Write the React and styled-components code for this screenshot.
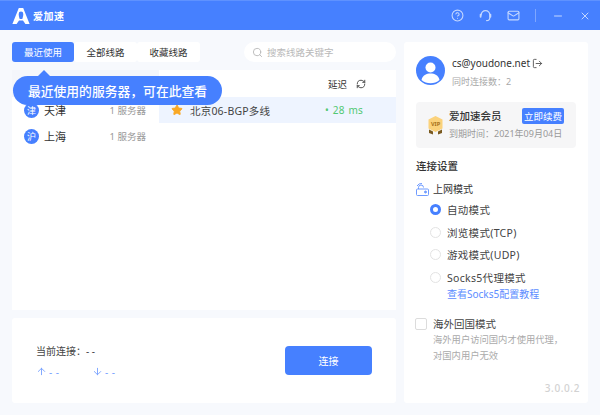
import styled, { createGlobalStyle } from "styled-components";
import { Search, RefreshCw, HelpCircle, Mail, Minus, X, LogOut, ArrowUp, ArrowDown, Star } from "lucide-react";

const Global = createGlobalStyle`
  html, body {
    margin: 0;
    padding: 0;
    background: #f7f9fd;
  }
  * {
    box-sizing: border-box;
  }
  body {
    font-family: "Noto Sans", "Noto Sans CJK SC", sans-serif;
  }
`;

const Page = styled.div`
  width: 600px;
  height: 415px;
  display: flex;
  flex-direction: column;
  overflow: hidden;
  background: #f7f9fd;
  color: #333;
`;

const Header = styled.header`
  height: 30px;
  flex: none;
  display: flex;
  align-items: center;
  justify-content: space-between;
  background: #4680ff;
  border-top: 1px solid #5f92ff;
  padding: 0 9px 0 12px;
  color: #fff;
`;

const Brand = styled.div`
  display: flex;
  align-items: center;
  gap: 3px;
  font-size: 10px;
  font-weight: 700;
  letter-spacing: 0.5px;
`;

const HeaderIcons = styled.div`
  display: flex;
  align-items: center;
  gap: 15px;
  color: #c4d7ff;
`;

const Divider = styled.span`
  width: 1px;
  height: 13px;
  background: #7ea6ff;
  margin: 0 1px 0 0;
`;

const Body = styled.main`
  flex: 1;
  display: flex;
  gap: 8px;
  padding: 12px;
  min-height: 0;
`;

const LeftColumn = styled.div`
  width: 384px;
  display: flex;
  flex-direction: column;
`;

const TopBar = styled.div`
  height: 20px;
  display: flex;
  align-items: center;
  margin-bottom: 8px;
`;

const Tab = styled.div`
  width: ${(p) => p.$width}px;
  height: 20px;
  display: flex;
  align-items: center;
  justify-content: center;
  border-radius: 3px;
  font-size: 9.5px;
  background: ${(p) => (p.$active ? "#4680ff" : "#fff")};
  color: ${(p) => (p.$active ? "#fff" : "#333")};
`;

const SearchBox = styled.div`
  width: 152px;
  height: 20px;
  margin-left: 44px;
  padding-left: 8px;
  display: flex;
  align-items: center;
  gap: 4px;
  border-radius: 10px;
  background: #fff;
  color: #b9b9b9;
  font-size: 9.5px;
`;

const ListPanel = styled.section`
  position: relative;
  height: 240px;
  display: flex;
  background: #fff;
`;

const Regions = styled.div`
  width: 147px;
  padding-top: 27px;
  background: linear-gradient(#f4f6fb 0, #f4f6fb 27px, #fff 27px);
`;

const RegionRow = styled.div`
  height: 26px;
  display: flex;
  align-items: center;
  padding: 0 13px 0 12px;
  font-size: 11px;
`;

const RegionBadge = styled.span`
  width: 15px;
  height: 15px;
  margin-right: 5px;
  border-radius: 50%;
  background: #4680ff;
  color: #fff;
  font-size: 9px;
  display: flex;
  align-items: center;
  justify-content: center;
`;

const RegionCount = styled.span`
  margin-left: auto;
  color: #999;
  font-size: 9.5px;
`;

const Servers = styled.div`
  flex: 1;
`;

const ServerHead = styled.div`
  height: 27px;
  display: flex;
  align-items: center;
  justify-content: flex-end;
  gap: 9px;
  padding-right: 30px;
  font-size: 9.5px;
  color: #333;
`;

const ServerRow = styled.div`
  height: 26px;
  display: flex;
  align-items: center;
  padding: 0 33px 0 12px;
  background: #eef4ff;
  font-size: 10.5px;
  color: #444;
`;

const ServerName = styled.span`
  margin-left: 7px;
  letter-spacing: 0.2px;
`;

const Ping = styled.span`
  margin-left: auto;
  color: #52c873;
  font-size: 10px;
  letter-spacing: 0.2px;
  word-spacing: 1px;
`;

const Tip = styled.div`
  position: absolute;
  left: 1px;
  top: 6px;
  width: 209px;
  height: 29px;
  border-radius: 15px;
  background: #4680ff;
  color: #fff;
  font-size: 12.8px;
  font-weight: 500;
  display: flex;
  align-items: center;
  justify-content: center;
  &::before {
    content: "";
    position: absolute;
    left: 24px;
    top: -6px;
    border-left: 7px solid transparent;
    border-right: 7px solid transparent;
    border-bottom: 7px solid #4680ff;
  }
`;

const ConnectPanel = styled.section`
  margin-top: 8px;
  flex: 1;
  display: flex;
  align-items: center;
  justify-content: space-between;
  padding: 0 24px;
  background: #fff;
  border-radius: 3px;
`;

const ConnectInfo = styled.div`
  display: flex;
  flex-direction: column;
  gap: 7px;
  font-size: 10px;
  color: #444;
`;

const Traffic = styled.div`
  display: flex;
  color: #78a2ff;
  font-size: 10px;
`;

const TrafficItem = styled.span`
  width: 56px;
  display: flex;
  align-items: center;
  gap: 2px;
  letter-spacing: 0.5px;
`;

const ConnectButton = styled.button`
  width: 87px;
  height: 29px;
  border: 0;
  border-radius: 4px;
  background: #4680ff;
  color: #fff;
  font: inherit;
  font-size: 10px;
`;

const Side = styled.aside`
  flex: 1;
  display: flex;
  flex-direction: column;
  padding: 14px 12px 8px;
  background: #fff;
  border-radius: 3px;
`;

const Account = styled.div`
  display: flex;
  gap: 7px;
`;

const Email = styled.div`
  display: flex;
  align-items: center;
  gap: 2px;
  font-size: 10px;
  color: #333;
`;

const Sub = styled.div`
  margin-top: 5px;
  font-size: 9px;
  color: #a8a8a8;
`;

const VipCard = styled.div`
  margin-top: 14px;
  height: 46px;
  padding: 0 12px;
  display: flex;
  align-items: center;
  gap: 6px;
  border-radius: 4px;
  background: #f6f6f7;
`;

const VipInfo = styled.div`
  flex: 1;
`;

const VipTitle = styled.div`
  display: flex;
  justify-content: space-between;
  align-items: center;
  margin-top: -3px;
  font-size: 10.5px;
  font-weight: 500;
`;

const RenewButton = styled.span`
  width: 42px;
  height: 16px;
  display: flex;
  align-items: center;
  justify-content: center;
  border-radius: 2px;
  background: #4680ff;
  color: #fff;
  font-size: 9.5px;
  font-weight: 400;
`;

const VipDate = styled.div`
  margin-top: 3px;
  font-size: 9px;
  color: #999;
`;

const SectionTitle = styled.div`
  margin-top: 10px;
  font-size: 10.5px;
  font-weight: 500;
  line-height: 16px;
`;

const ModeHead = styled.div`
  margin-top: 7px;
  display: flex;
  align-items: center;
  gap: 4px;
  font-size: 10px;
  line-height: 16px;
`;

const Modes = styled.div`
  margin-top: 5px;
  padding-left: 14px;
  display: flex;
  flex-direction: column;
  gap: 7.6px;
`;

const Mode = styled.div`
  display: flex;
  align-items: center;
  gap: 6px;
  height: 15px;
  font-size: 10.5px;
  letter-spacing: 0.3px;
  color: #444;
`;

const Radio = styled.span`
  width: 11px;
  height: 11px;
  border-radius: 50%;
  background: #fff;
  border: ${(p) => (p.$on ? "3px solid #4680ff" : "1px solid #e3e3e3")};
`;

const ModeLink = styled.div`
  margin: -5px 0 0 17px;
  color: #5d8dff;
  font-size: 10px;
  line-height: 14px;
`;

const Overseas = styled.div`
  margin-top: 15px;
  display: flex;
  gap: 6px;
`;

const Checkbox = styled.span`
  width: 12px;
  height: 12px;
  margin-top: 2px;
  flex: none;
  margin-left: -1px;
  border: 1px solid #dcdcdc;
  border-radius: 2px;
`;

const OverseasTitle = styled.div`
  font-size: 10.5px;
  line-height: 16px;
  color: #444;
`;

const OverseasNote = styled.div`
  font-size: 9.3px;
  line-height: 16px;
  color: #aaa;
`;

const Version = styled.div`
  margin-top: auto;
  margin-right: -4px;
  text-align: right;
  font-size: 10px;
  font-weight: 500;
  letter-spacing: 0.6px;
  color: #d2d2d2;
`;

const Logo = () => (
  <svg width="18" height="16" viewBox="0 0 18 16" fill="#fff">
    <path
      fillRule="evenodd"
      d="M6.8 0h4.4L17.6 16h-4.2l-2.4-3.4H7L4.6 16H.4zM9 3.6a2.3 2.3 0 0 0-2.3 2.3c0 1.2.3 3.1 1 5h2.6c.7-1.9 1-3.8 1-5A2.3 2.3 0 0 0 9 3.6z"
    />
  </svg>
);

const HeadsetIcon = () => (
  <svg width="13" height="13" viewBox="0 0 13 13" fill="none" stroke="currentColor" strokeWidth="1.2" strokeLinecap="round">
    <path d="M2.2 6A4.3 4.3 0 0 1 6.5 1.6 4.3 4.3 0 0 1 10.8 6v2.4A3.2 3.2 0 0 1 7.6 11.6" />
    <path d="M1.6 5.6v2.2M11.4 5.6v2.2" strokeWidth="1.8" />
  </svg>
);

const Avatar = () => (
  <svg width="29" height="29" viewBox="0 0 29 29">
    <circle cx="14.5" cy="14.5" r="14.5" fill="#4680ff" />
    <circle cx="14.5" cy="11.5" r="5" fill="#fff" />
    <path d="M5.5 24c1-5 5-6.5 9-6.5s8 1.5 9 6.5a14 14 0 0 1-18 0z" fill="#fff" />
  </svg>
);

const VipBadge = () => (
  <svg width="15" height="19" viewBox="0 0 15 19">
    <path d="M7.5 0l7 3.6v9L7.5 16 .5 12.6v-9z" fill="#fbd27b" />
    <path d="M1 13.5l4 2v3l-4-1.6zM14 13.5l-4 2v3l4-1.6z" fill="#7a5a20" />
    <text x="7.5" y="10" fontSize="5.5" fontWeight="700" fill="#a6701a" textAnchor="middle">VIP</text>
  </svg>
);

const ModeIcon = () => (
  <svg width="13" height="13" viewBox="0 0 13 13" fill="none" stroke="#6f9bff" strokeWidth="1">
    <rect x="0.5" y="6" width="12" height="6.5" rx="1" />
    <path d="M2.5 6V4.5a2.5 2.5 0 0 1 5 0M1 3a5 5 0 0 1 5-2.5" />
    <circle cx="9.5" cy="9" r="1" fill="#6f9bff" />
  </svg>
);

const regions = [
  { badge: "津", name: "天津" },
  { badge: "沪", name: "上海" },
];

const modes = [
  { label: "自动模式", on: true },
  { label: "浏览模式(TCP)" },
  { label: "游戏模式(UDP)" },
  { label: "Socks5代理模式" },
];

const App = () => {
  return (
    <Page>
      <Global />
      <Header>
        <Brand>
          <Logo />
          爱加速
        </Brand>
        <HeaderIcons>
          <HelpCircle size={13} />
          <HeadsetIcon />
          <Mail size={13} />
          <Divider />
          <Minus size={12} />
          <X size={12} />
        </HeaderIcons>
      </Header>
      <Body>
        <LeftColumn>
          <TopBar>
            <Tab $active $width={62}>最近使用</Tab>
            <Tab $width={63}>全部线路</Tab>
            <Tab $width={63}>收藏线路</Tab>
            <SearchBox>
              <Search size={11} />
              搜索线路关键字
            </SearchBox>
          </TopBar>
          <ListPanel>
            <Regions>
              {regions.map((r) => (
                <RegionRow key={r.name}>
                  <RegionBadge>{r.badge}</RegionBadge>
                  {r.name}
                  <RegionCount>1 服务器</RegionCount>
                </RegionRow>
              ))}
            </Regions>
            <Servers>
              <ServerHead>
                延迟
                <RefreshCw size={10} color="#333" />
              </ServerHead>
              <ServerRow>
                <Star size={12} fill="#f9a825" color="#f9a825" />
                <ServerName>北京06-BGP多线</ServerName>
                <Ping>• 28 ms</Ping>
              </ServerRow>
            </Servers>
            <Tip>最近使用的服务器，可在此查看</Tip>
          </ListPanel>
          <ConnectPanel>
            <ConnectInfo>
              <div>当前连接：- -</div>
              <Traffic>
                <TrafficItem><ArrowUp size={11} />- -</TrafficItem>
                <TrafficItem><ArrowDown size={11} />- -</TrafficItem>
              </Traffic>
            </ConnectInfo>
            <ConnectButton>连接</ConnectButton>
          </ConnectPanel>
        </LeftColumn>
        <Side>
          <Account>
            <Avatar />
            <div>
              <Email>
                cs@youdone.net
                <LogOut size={11} color="#555" />
              </Email>
              <Sub>同时连接数：2</Sub>
            </div>
          </Account>
          <VipCard>
            <VipBadge />
            <VipInfo>
              <VipTitle>
                爱加速会员
                <RenewButton>立即续费</RenewButton>
              </VipTitle>
              <VipDate>到期时间：2021年09月04日</VipDate>
            </VipInfo>
          </VipCard>
          <SectionTitle>连接设置</SectionTitle>
          <ModeHead>
            <ModeIcon />
            上网模式
          </ModeHead>
          <Modes>
            {modes.map((m) => (
              <Mode key={m.label}>
                <Radio $on={m.on} />
                {m.label}
              </Mode>
            ))}
            <ModeLink>查看Socks5配置教程</ModeLink>
          </Modes>
          <Overseas>
            <Checkbox />
            <div>
              <OverseasTitle>海外回国模式</OverseasTitle>
              <OverseasNote>
                海外用户访问国内才使用代理，
                <br />
                对国内用户无效
              </OverseasNote>
            </div>
          </Overseas>
          <Version>3.0.0.2</Version>
        </Side>
      </Body>
    </Page>
  );
};

export default App;
